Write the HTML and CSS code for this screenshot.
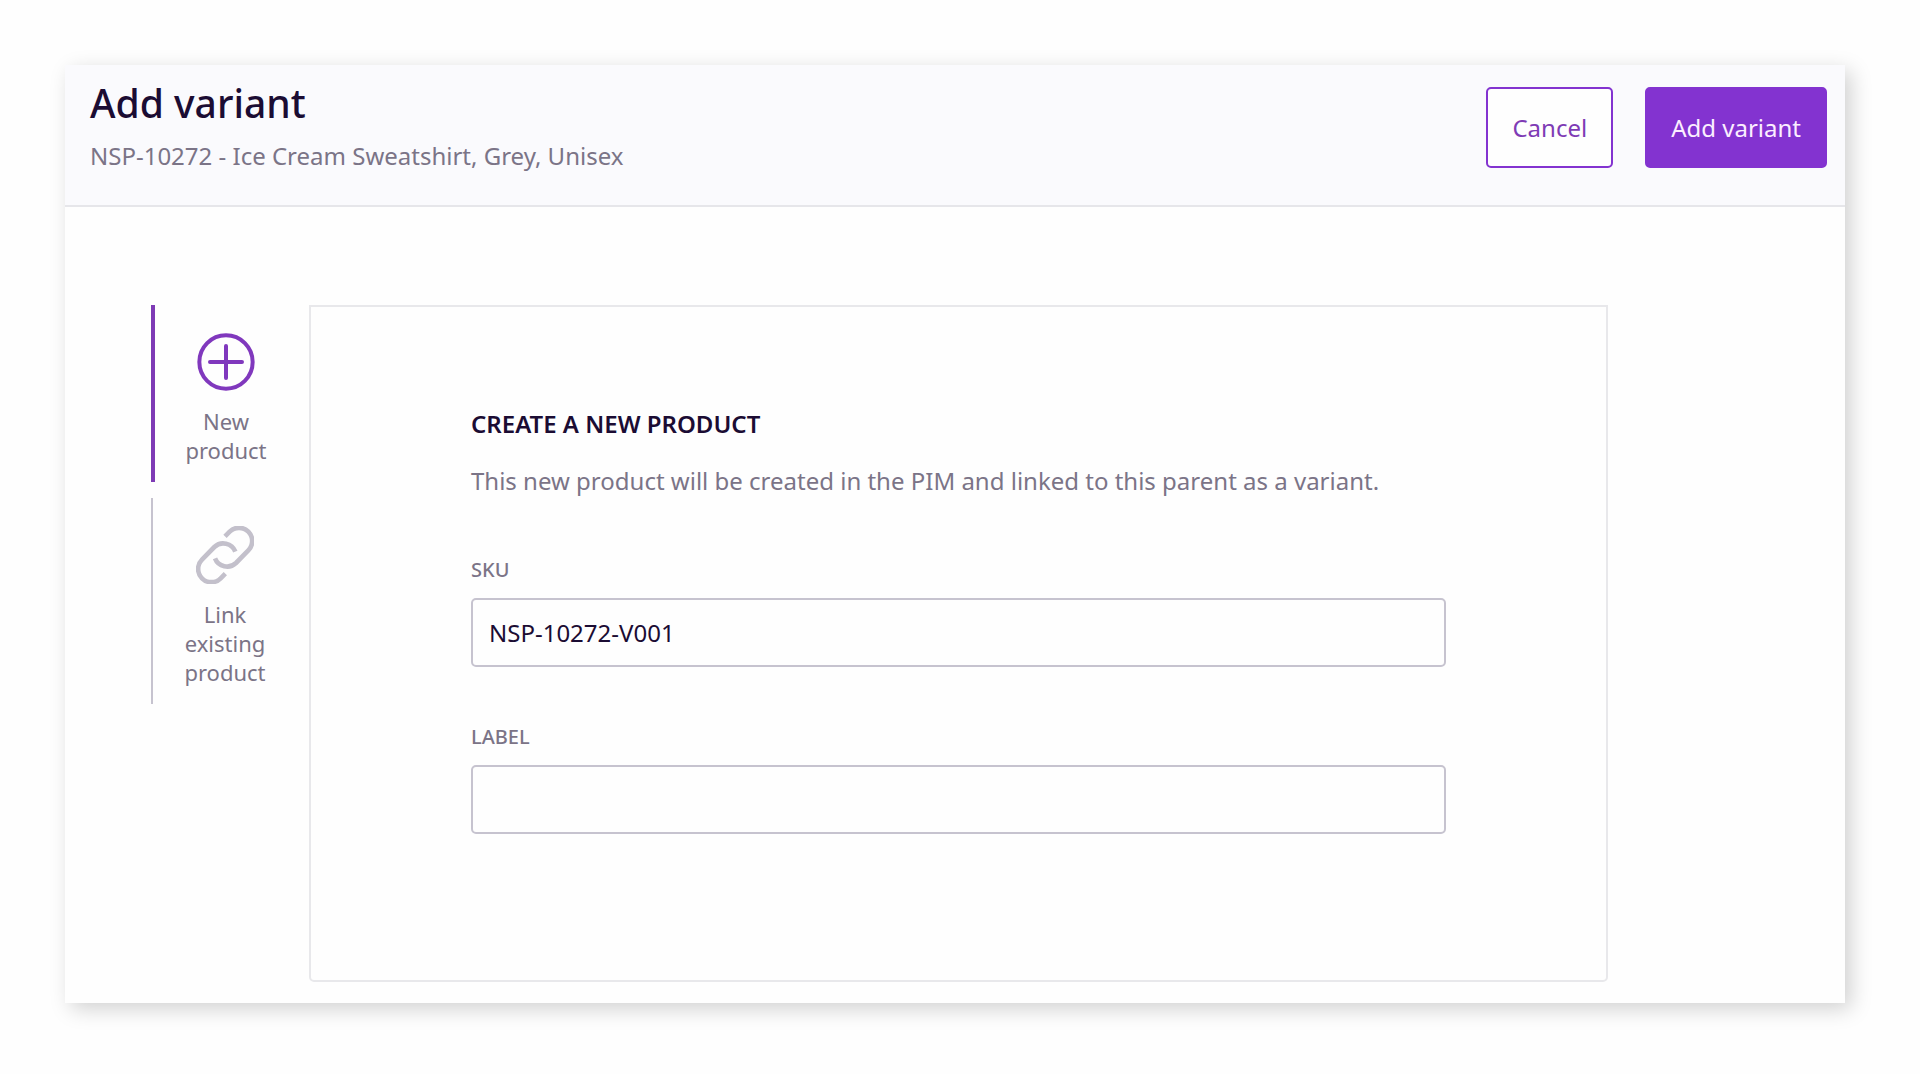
FILE: index.html
```html
<!DOCTYPE html>
<html lang="en">
<head>
  <meta charset="UTF-8" />
  <title>Add variant</title>
  <meta name="viewport" content="width=device-width, initial-scale=1.0" />
  <link rel="stylesheet" href="styles.css">
</head>
<body>

  <form class="dialog">
    <header class="dialog-header">
      <div class="heading">
        <h1>Add variant</h1>
        <p>NSP-10272 - Ice Cream Sweatshirt, Grey, Unisex</p>
      </div>
      <div class="actions">
        <button type="button" class="btn btn-outline">Cancel</button>
        <button type="submit" class="btn btn-primary">Add variant</button>
      </div>
    </header>

    <main class="dialog-body">
      <nav class="tabs">
        <button type="button" class="tab active">
          <svg class="tab-icon" viewBox="0 0 174 174" stroke-width="12" stroke-linecap="round">
            <circle cx="87" cy="87" r="80" />
            <path d="M87 39V135M39 87H135" />
          </svg>
          <span>New product</span>
        </button>
        <button type="button" class="tab">
          <svg class="tab-icon" viewBox="0 0 174 174" stroke-width="14">
            <path d="M87 31L101 17A39 39 0 0 1 157 73L120 111A39 39 0 0 1 57 97" />
            <path d="M88 143L74 157A39 39 0 0 1 18 101L55 63A39 39 0 0 1 118 77" />
          </svg>
          <span>Link existing product</span>
        </button>
      </nav>

      <section class="panel">
        <h2>CREATE A NEW PRODUCT</h2>
        <p class="intro">This new product will be created in the PIM and linked to this parent as a variant.</p>

        <div class="field">
          <label for="sku">SKU</label>
          <input type="text" id="sku" value="NSP-10272-V001" />
        </div>
        <div class="field">
          <label for="label">LABEL</label>
          <input type="text" id="label" />
        </div>
      </section>
    </main>
  </form>

</body>
</html>
```
FILE: styles.css
```css
* {
  box-sizing: border-box;
}

body {
  margin: 0;
  padding: 65px 75px 71px 65px;
  font-family: "Noto Sans", sans-serif;
  font-size: 24px;
  line-height: 34px;
  color: #7b7487;
  background: #fefefe;
}

h1, h2, p {
  margin: 0;
}

button, input {
  font: inherit;
}

.dialog {
  background: #fefefe;
  box-shadow: 6px 6px 20px rgba(0, 0, 0, 0.18);
}

.dialog-header {
  display: flex;
  justify-content: space-between;
  align-items: flex-start;
  padding: 10px 18px 32px 25px;
  background: #fafafd;
  border-bottom: 2px solid #e6e6ea;
}

.heading h1 {
  margin-bottom: 8px;
  font-size: 39px;
  font-weight: 500;
  line-height: 56px;
  color: #1b0c33;
}

.actions {
  display: flex;
  gap: 32px;
  padding-top: 12px;
}

.btn {
  height: 81px;
  padding: 0 24px;
  border: 2px solid #8333d0;
  border-radius: 5px;
  cursor: pointer;
}

.btn-outline {
  background: #fefefe;
  color: #7e3bb5;
}

.btn-primary {
  background: #8333d0;
  color: #fbeeff;
}

.dialog-body {
  display: flex;
  align-items: flex-start;
  gap: 12px;
  padding: 98px 237px 21px 86px;
}

.tabs {
  display: flex;
  flex-direction: column;
  flex: none;
  gap: 16px;
  width: 146px;
}

.tab {
  display: flex;
  flex-direction: column;
  align-items: center;
  gap: 16px;
  padding: 28px 24px 17px;
  border: none;
  border-left: 2px solid #c6c3cf;
  background: none;
  font-size: 22px;
  line-height: 29px;
  color: #7b7487;
  cursor: pointer;
}

.tab.active {
  border-left: 4px solid #7e3bb5;
}

.tab-icon {
  width: 58px;
  height: 58px;
  fill: none;
  stroke: #c3c0cb;
}

.tab.active .tab-icon {
  stroke: #8038bd;
}

.panel {
  flex: 1;
  padding: 100px 160px 146px;
  border: 2px solid #e8e8eb;
  border-radius: 0 0 5px 5px;
}

.panel h2 {
  margin-bottom: 23px;
  font-size: 24px;
  font-weight: 600;
  line-height: 34px;
  color: #1b0c33;
}

.intro {
  margin-bottom: 58px;
}

.field + .field {
  margin-top: 56px;
}

.field label {
  display: block;
  margin-bottom: 14px;
  font-size: 20px;
  font-weight: 500;
  line-height: 28px;
}

.field input {
  display: block;
  width: 100%;
  height: 69px;
  padding: 0 16px;
  border: 2px solid #c6c3cf;
  border-radius: 5px;
  background: #fefefe;
  color: #1b0c33;
}
```
